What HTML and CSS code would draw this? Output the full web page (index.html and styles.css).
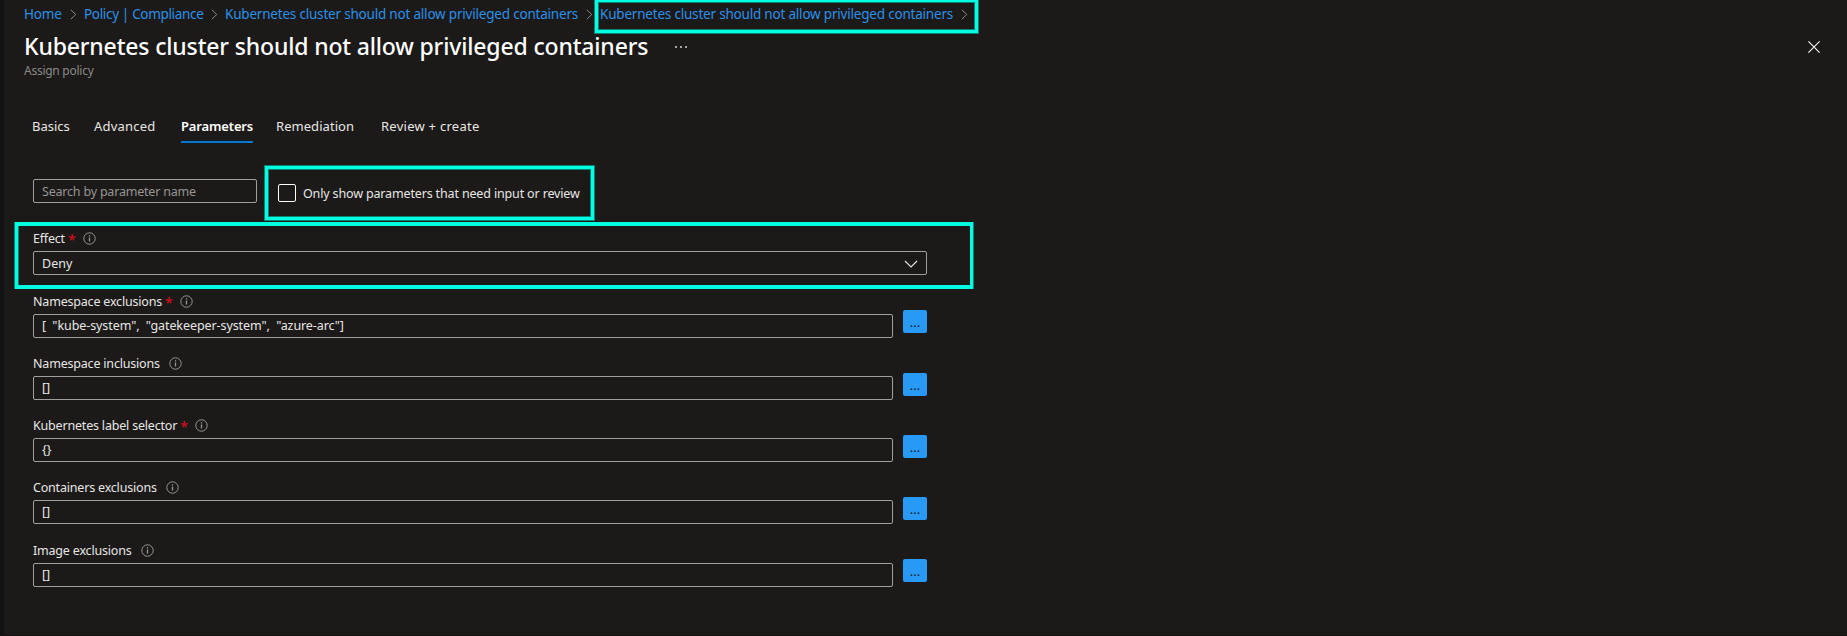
FILE: index.html
```
<!DOCTYPE html>
<html lang="en">
<head>
<meta charset="utf-8">
<title>Assign policy</title>
<link rel="stylesheet" href="styles.css">
</head>
<body>
<svg class="defs" width="0" height="0">
  <symbol id="info" viewBox="0 0 13 13"><circle cx="6.5" cy="6.5" r="5.7" fill="none" stroke="#979593" stroke-width="1"/><path d="M6.5 5.6v4M6.5 3.2v1.3" stroke="#979593" stroke-width="1.3" fill="none"/></symbol>
  <symbol id="sep" viewBox="0 0 7 11"><path d="M.8.8 5.8 5.5.8 10.2" fill="none" stroke="#8a8886" stroke-width="1"/></symbol>
</svg>
<main class="page">
  <nav class="crumbs">
    <a class="crumb-home">Home</a><svg class="sep"><use href="#sep"/></svg>
    <a class="crumb-policy">Policy | Compliance</a><svg class="sep"><use href="#sep"/></svg>
    <a class="crumb-long">Kubernetes cluster should not allow privileged containers</a><svg class="sep"><use href="#sep"/></svg>
    <a class="crumb-long crumb-last">Kubernetes cluster should not allow privileged containers</a><svg class="sep"><use href="#sep"/></svg>
  </nav>
  <header class="head">
    <h1 class="title">Kubernetes cluster should not allow privileged containers</h1>
    <svg class="more" viewBox="0 0 12 2"><path d="M0 0h2v2H0zM5 0h2v2H5zM10 0h2v2h-2z" fill="#a6a5a4"/></svg>
    <svg class="close" viewBox="0 0 12 12"><path d="M.4.4l11.2 11.2M11.6.4.4 11.6" stroke="#f3f2f1" stroke-width="1.2"/></svg>
  </header>
  <p class="subtitle">Assign policy</p>
  <div class="tabs">
    <a class="tab tab-basics">Basics</a>
    <a class="tab tab-advanced">Advanced</a>
    <a class="tab tab-parameters">Parameters</a>
    <a class="tab tab-remediation">Remediation</a>
    <a class="tab tab-review">Review + create</a>
  </div>
  <div class="filter">
    <div class="box search">Search by parameter name</div>
    <span class="check"></span>
    <span class="check-label">Only show parameters that need input or review</span>
  </div>
  <section class="fields">
    <div class="field field-tall">
      <div class="label"><span class="l-effect">Effect</span><b class="req">*</b><svg class="info"><use href="#info"/></svg></div>
      <div class="box select"><span>Deny</span><svg class="chev" viewBox="0 0 14 8"><path d="M1 1l6 6 6-6" fill="none" stroke="#e1dfdd" stroke-width="1.2"/></svg></div>
    </div>
    <div class="field">
      <div class="label"><span>Namespace exclusions</span><b class="req">*</b><svg class="info"><use href="#info"/></svg></div>
      <div class="row"><div class="box t-list">[&nbsp; "kube-system",&nbsp; "gatekeeper-system",&nbsp; "azure-arc"]</div><button class="dots dots-high">...</button></div>
    </div>
    <div class="field">
      <div class="label"><span>Namespace inclusions</span><svg class="info"><use href="#info"/></svg></div>
      <div class="row"><div class="box">[]</div><button class="dots">...</button></div>
    </div>
    <div class="field">
      <div class="label"><span>Kubernetes label selector</span><b class="req">*</b><svg class="info"><use href="#info"/></svg></div>
      <div class="row"><div class="box">{}</div><button class="dots">...</button></div>
    </div>
    <div class="field field-tall">
      <div class="label"><span>Containers exclusions</span><svg class="info"><use href="#info"/></svg></div>
      <div class="row"><div class="box">[]</div><button class="dots">...</button></div>
    </div>
    <div class="field">
      <div class="label"><span>Image exclusions</span><svg class="info"><use href="#info"/></svg></div>
      <div class="row"><div class="box">[]</div><button class="dots dots-high">...</button></div>
    </div>
  </section>
</main>
<div class="mark mark-crumb"></div>
<div class="mark mark-check"></div>
<div class="mark mark-effect"></div>
</body>
</html>
```
FILE: styles.css
```
* { box-sizing: border-box; margin: 0; padding: 0; }
body { height: 636px; overflow: hidden; background: #1b1a19; border-left: 4px solid #121212; font: 12.5px/20px "Noto Sans", "Open Sans", sans-serif; color: #e8e6e4; }
.defs { position: absolute; }
.page { height: 636px; border-bottom: 1px solid #140f12; }
.crumbs { display: flex; height: 30px; padding-left: 20px; line-height: 20px; padding-top: 4px; font-size: 13.5px; letter-spacing: -.2px; color: #2b90e8; white-space: nowrap; }
.crumbs a { flex: none; }
.sep { width: 7px; height: 11px; margin-top: 5px; flex: none; }
.crumb-home { width: 46px; }
.crumb-policy { width: 127px; margin-left: 7px; letter-spacing: -.33px; }
.crumb-long { width: 361px; margin-left: 7px; }
.head { display: flex; height: 34px; padding: 0 27px 0 20px; align-items: flex-start; white-space: nowrap; }
.title { width: 651px; font-size: 23px; line-height: 33px; font-weight: 500; letter-spacing: -.16px; color: #fff; }
.more { width: 12px; height: 2px; margin-top: 16px; }
.close { width: 12px; height: 12px; margin: 11px 0 0 auto; }
.subtitle { padding-left: 20px; height: 48px; line-height: 14px; font-size: 12px; letter-spacing: -.26px; color: #8a8886; }
.tabs { display: flex; height: 67px; padding-left: 28px; white-space: nowrap; font-size: 13px; }
.tab { height: 31px; line-height: 28px; padding-bottom: 2px; flex: none; }
.tab-basics { width: 62px; }
.tab-advanced { width: 87px; letter-spacing: .2px; }
.tab-parameters { width: 72px; margin-right: 23px; font-weight: 600; letter-spacing: -.15px; color: #fff; border-bottom: 2px solid #0078d4; }
.tab-remediation { width: 105px; letter-spacing: .05px; }
.tab-review { letter-spacing: .26px; }
.filter { display: flex; height: 54px; padding-left: 29px; white-space: nowrap; }
.box { height: 24px; border: 1px solid #a19f9d; border-radius: 2px; padding-left: 8px; line-height: 22px; white-space: nowrap; }
.search { width: 224px; color: #979593; letter-spacing: -.2px; line-height: 24px; }
.check { width: 18px; height: 18px; border: 1px solid #fff; border-radius: 2px; margin: 5px 7px 0 21px; }
.check-label { line-height: 30px; letter-spacing: -.15px; }
.fields { padding-left: 29px; width: 923px; }
.field { height: 62px; }
.field-tall { height: 63px; }
.label { display: flex; height: 18px; line-height: 11px; letter-spacing: -.19px; white-space: nowrap; }
.l-effect { letter-spacing: -.2px; }
.req { color: #e00b1c; font-size: 14px; font-weight: 400; line-height: 13px; width: 6px; letter-spacing: 0; margin-left: 3px; }
.info { width: 13px; height: 13px; margin: -1px 0 0 9px; }
.select { display: flex; justify-content: space-between; line-height: 24px; }
.chev { width: 14px; height: 8px; margin: 8px 8px 0 0; }
.row { display: flex; justify-content: space-between; }
.row .box { width: 860px; }
.row .t-list { letter-spacing: -.08px; }
.dots { width: 24px; height: 23px; margin-top: -3px; border: 0; border-radius: 2px; background: #2899f5; color: #1b1a19; font: 13px/20px "Noto Sans", sans-serif; }
.dots-high { margin-top: -4px; }
.mark { position: absolute; border: 3px solid #00ffe0; box-shadow: 0 0 0 1px rgba(0, 255, 224, .45), inset 0 0 0 1px rgba(0, 255, 224, .45); }
.mark-crumb { left: 595px; top: -1px; width: 383px; height: 34px; }
.mark-check { left: 265px; top: 166px; width: 329px; height: 54px; }
.mark-effect { left: 15px; top: 222px; width: 958px; height: 67px; border-width: 4px 3px; box-shadow: -1px 0 rgba(0, 255, 224, .45), 1px 0 rgba(0, 255, 224, .45), inset 1px 0 rgba(0, 255, 224, .45); }
```
